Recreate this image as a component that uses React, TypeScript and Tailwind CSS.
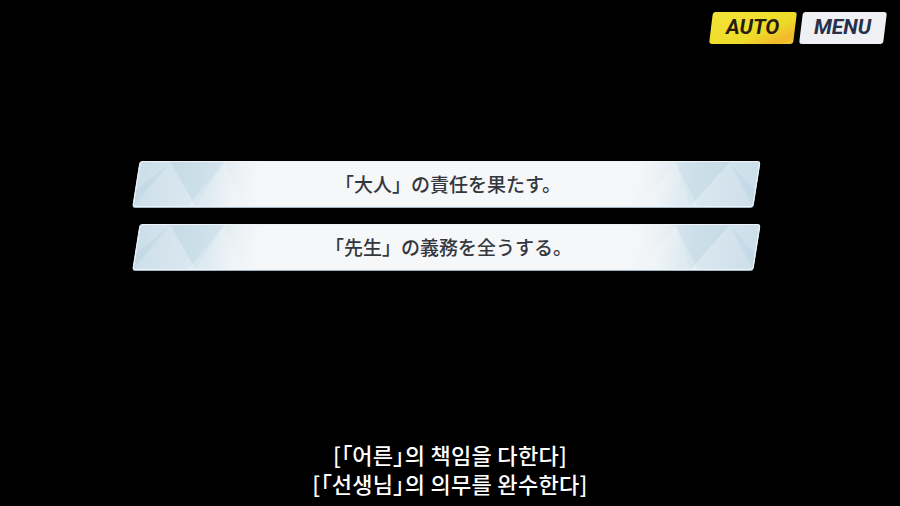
import React from "react"

const choices = ["「大人」の責任を果たす。", "「先生」の義務を全うする。"]

function Facets({ side }: { side: "left" | "right" }) {
  // faint crystal shards at the ends of each choice bar
  const flip = side === "right"
  return (
    <svg
      className={`absolute top-0 h-full w-[135px] ${flip ? "right-0 -scale-x-100" : "left-0"}`}
      viewBox="0 0 135 46"
      preserveAspectRatio="none"
    >
      <defs>
        <linearGradient id={`fade-${side}`} x1="0" x2="1" y1="0" y2="0">
          <stop offset="0" stopColor="#c3d9e6" />
          <stop offset="0.55" stopColor="#d7e6ef" />
          <stop offset="1" stopColor="#f6f7f9" stopOpacity="0" />
        </linearGradient>
      </defs>
      <rect x="0" y="0" width="135" height="46" fill={`url(#fade-${side})`} />
      <polygon points="0,46 30,0 62,46" fill="#ffffff" opacity="0.18" />
      <polygon points="30,0 62,46 84,0" fill="#a9c7da" opacity="0.15" />
      <polygon points="55,46 84,0 110,46" fill="#ffffff" opacity="0.22" />
      <polygon points="0,0 30,0 0,30" fill="#ffffff" opacity="0.15" />
    </svg>
  )
}

export default function App() {
  return (
    <div className="w-[900px] h-[506px] bg-black flex flex-col overflow-hidden">
      <div className="flex justify-end gap-[6px] pt-3 pr-[15px]">
        <button className="-skew-x-[7deg] w-[84px] h-8 rounded-[3px] bg-[linear-gradient(155deg,#f4e43a_0%,#eedb28_62%,#f2b62c_88%,#f0cf30_100%)] flex items-center justify-center">
          <span
            className="skew-x-[7deg] italic font-bold text-[21px] text-[#261d10]"
            style={{ fontFamily: "Roboto, 'Liberation Sans', sans-serif" }}
          >
            AUTO
          </span>
        </button>
        <button className="-skew-x-[7deg] w-[84px] h-8 rounded-[3px] bg-[#eef0f4] flex items-center justify-center">
          <span
            className="skew-x-[7deg] italic font-bold text-[21px] text-[#262f4b]"
            style={{ fontFamily: "Roboto, 'Liberation Sans', sans-serif" }}
          >
            MENU
          </span>
        </button>
      </div>

      <div className="flex flex-col items-center gap-[17px] mt-[117px] pr-[8px]">
        {choices.map((c) => (
          <div
            key={c}
            className="relative -skew-x-[9deg] w-[621px] h-[46px] rounded-[3px] border border-[#eef3f7] bg-[#f6f7f9] overflow-hidden flex items-center justify-center shadow-[0_1px_0_#9fb2c0]"
          >
            <Facets side="left" />
            <Facets side="right" />
            <span
              className="relative skew-x-[9deg] text-[19px] font-medium text-[#34373e] pl-1"
              style={{ fontFamily: "'Noto Sans CJK JP', sans-serif" }}
            >
              {c}
            </span>
          </div>
        ))}
      </div>

      <div
        className="mt-auto pb-[9px] flex flex-col items-center gap-[1px] text-white text-[22px] font-medium leading-[28px] tracking-[0.3px]"
        style={{
          fontFamily: "'Noto Sans CJK KR', sans-serif",
          fontFeatureSettings: "'palt'",
          textShadow: "0 0 2px #000, 0 0 2px #000",
        }}
      >
        <div>[「어른」의 책임을 다한다]</div>
        <div>[「선생님」의 의무를 완수한다]</div>
      </div>
    </div>
  )
}
